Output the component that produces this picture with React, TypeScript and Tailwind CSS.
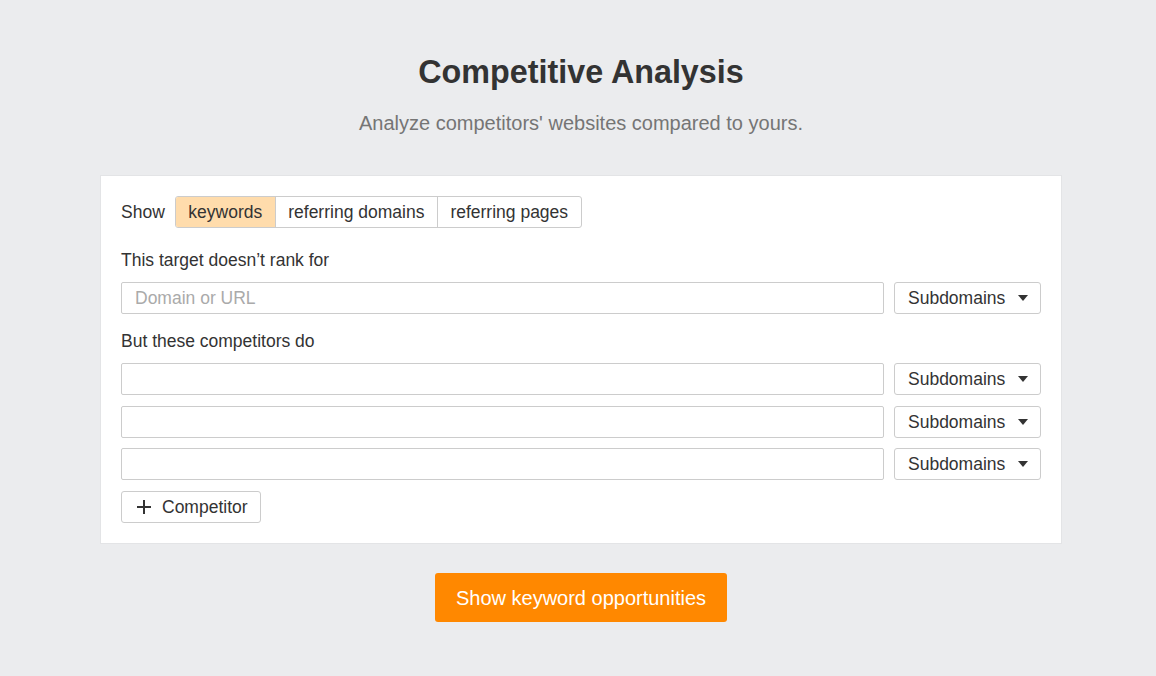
import React from "react";

const font = { fontFamily: '"Liberation Sans", Arial, sans-serif' };

function Caret() {
  return (
    <svg width="10" height="6" viewBox="0 0 10 6" className="ml-auto">
      <path d="M0 0 L10 0 L5 6 Z" fill="#333" />
    </svg>
  );
}

function Row({ placeholder, className = "" }: { placeholder?: string; className?: string }) {
  return (
    <div className={"flex gap-[10px] " + className}>
      <input
        placeholder={placeholder}
        className="h-[32px] flex-1 rounded-[2px] border border-[#cccccc] bg-white px-[13px] text-[17.5px] text-[#333] outline-none placeholder:text-[#aaaaaa]"
      />
      <button className="flex h-[32px] w-[147px] items-center rounded-[3px] border border-[#cccccc] bg-white pl-[13px] pr-[12px] text-[17.5px] text-[#333]">
        Subdomains
        <Caret />
      </button>
    </div>
  );
}

export default function App() {
  return (
    <div className="min-h-[676px] w-full bg-[#ebecee] text-[#333]" style={font}>
      <div className="ml-[100px] w-[962px] pt-[52px] pb-[54px]">
        <h1 className="text-center text-[32.3px] font-bold leading-[40px] text-[#333]">Competitive Analysis</h1>
        <p className="mt-[17px] text-center text-[20px] leading-[28px] text-[#757575]">
          Analyze competitors' websites compared to yours.
        </p>
        <div className="mt-[38px] border border-[#e3e4e6] bg-white px-[20px] pt-[20px] pb-[20px]">
          <div className="flex h-[32px] items-center text-[17.5px]">
            <span className="mr-[10px]">Show</span>
            <div className="flex h-[32px] overflow-hidden rounded-[3px] border border-[#cccccc]">
              <div className="flex items-center bg-[#ffdcac] px-[12.5px]">keywords</div>
              <div className="flex items-center border-l border-[#cccccc] px-[12.5px]">referring domains</div>
              <div className="flex items-center border-l border-[#cccccc] px-[12.5px]">referring pages</div>
            </div>
          </div>
          <div className="mt-[20px] text-[17.5px] leading-[24px]">This target doesn’t rank for</div>
          <Row placeholder="Domain or URL" className="mt-[10px]" />
          <div className="mt-[15px] text-[17.5px] leading-[24px]">But these competitors do</div>
          <Row className="mt-[10px]" />
          <Row className="mt-[11px]" />
          <Row className="mt-[10px]" />
          <button className="mt-[11px] flex h-[32px] w-[140px] items-center rounded-[3px] border border-[#cccccc] bg-white pl-[14px] text-[17.5px] text-[#333]">
            <svg width="16" height="16" viewBox="0 0 16 16" className="mr-[10px]">
              <path d="M8 1 V15 M1 8 H15" stroke="#333" strokeWidth="2" />
            </svg>
            Competitor
          </button>
        </div>
        <div className="mt-[29px] flex justify-center">
          <button className="h-[49px] w-[292px] rounded-[3px] bg-[#ff8800] text-[20px] text-white">
            Show keyword opportunities
          </button>
        </div>
      </div>
    </div>
  );
}
